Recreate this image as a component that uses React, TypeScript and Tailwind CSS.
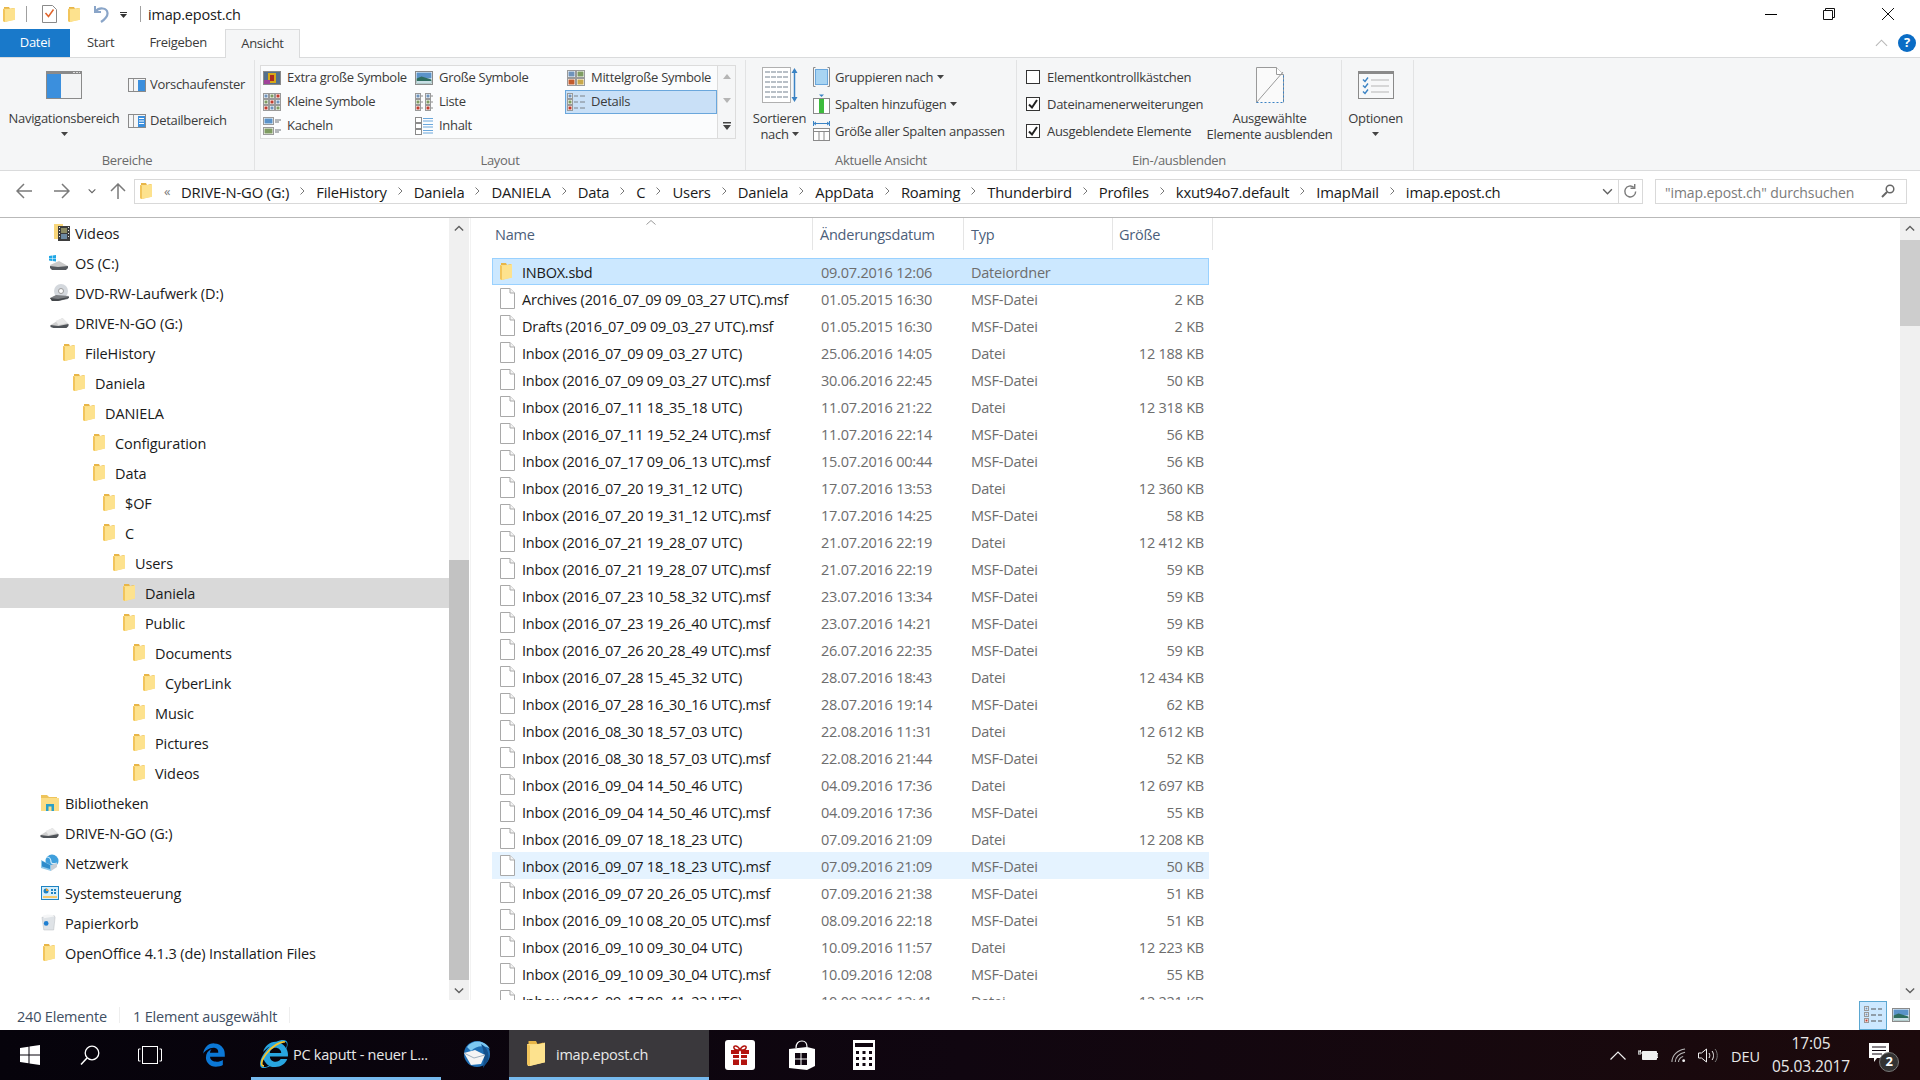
import React from "react";
import { FaInternetExplorer } from "react-icons/fa";
import { FaEdgeLegacy } from "react-icons/fa6";

const Folder = ({ className = "" }: { className?: string }) => (
  <svg viewBox="0 0 12 17" className={className} preserveAspectRatio="none">
    <path d="M1 0h5l1 2 4-1v13l-10 3z" fill="#e8b648" />
    <path d="M0 2h9.500l2.500-1v13.500l-10 2.500h-1.500z" fill="#fbdd86" />
    <path d="M2 16.800V3l10-1.500v13z" fill="#fde28e" />
    <path d="M0 2v14l2 1V3z" fill="#f2c55c" />
  </svg>
);

const Doc = () => (
  <svg viewBox="0 0 15 21" className="w-[15px] h-[21px] shrink-0">
    <path d="M.5.500h9.500l4.500 4.500v15.500h-14z" fill="#fff" stroke="#a9a9a9" />
    <path d="M10 .5v4.500h4.500" fill="#f4f4f4" stroke="#a9a9a9" />
  </svg>
);

const Drive = () => (
  <svg viewBox="0 0 18 12" className="w-[19px] h-[12px] ml-[1px]">
    <path d="M0 8l12-7 6 6-1 3H2z" fill="#cfcfcf" />
    <path d="M5 4l7-3 5 5-9 2z" fill="#e9e9e9" />
    <path d="M0 8l8 1 10-2v2l-2 2H3L0 10z" fill="#4f5358" />
  </svg>
);

const VideoIcon = () => (
  <svg viewBox="0 0 17 17" className="w-[17px] h-[17px] ml-[1px]">
    <path d="M1 0h9v15H1z" fill="#f8d67a" />
    <rect x="5" y="2" width="12" height="15" fill="#3d3d3d" />
    <rect x="8" y="4" width="6" height="5" fill="#8c8c64" />
    <rect x="8" y="10" width="6" height="5" fill="#6d8aa3" />
    <path d="M6 3h1v1H6zM6 6h1v1H6zM6 9h1v1H6zM6 12h1v1H6zM15 3h1v1h-1zM15 6h1v1h-1zM15 9h1v1h-1zM15 12h1v1h-1z" fill="#eee" />
  </svg>
);

const OsDrive = () => (
  <svg viewBox="0 0 20 15" className="w-[20px] h-[15px]">
    <path d="M1 10l9-4 9 5-1 3H3z" fill="#c9c9c9" />
    <path d="M1 11l8 1 10-1v2l-2 2H3l-2-2z" fill="#55595e" />
    <path d="M0 1l3-.5V3H0zM3.500.400L7 0v3H3.500zM0 3.500h3V6L0 5.500zM3.500 3.500H7V6.500L3.500 6z" fill="#1fa7e6" />
  </svg>
);

const DvdIcon = () => (
  <svg viewBox="0 0 19 18" className="w-[19px] h-[18px] ml-[1px]">
    <circle cx="11" cy="7" r="7" fill="#d4d8dd" />
    <circle cx="11" cy="7" r="2.500" fill="#fff" stroke="#999" />
    <path d="M0 14l6-3 13 1-1 3-10 2H2z" fill="#7b7e82" />
    <path d="M0 14l8 1 11-2v1l-11 3H2z" fill="#44474b" />
  </svg>
);

const Library = () => (
  <svg viewBox="0 0 18 16" className="w-[18px] h-[16px] ml-[2px]">
    <path d="M0 0h6l2 2h8v2H0z" fill="#eec45b" />
    <rect y="3" width="18" height="13" fill="#fbdd86" />
    <path d="M5 16V9h8v7h-2.500v-4.500h-3V16z" fill="#2b9fc7" />
  </svg>
);

const Network = () => (
  <svg viewBox="0 0 18 18" className="w-[18px] h-[18px] ml-[2px]">
    <circle cx="11" cy="7" r="6.500" fill="#3f9fdc" />
    <path d="M6 3c3 0 4 3 4 5s3 2 6 1" stroke="#d5edfa" strokeWidth="1.200" fill="none" />
    <path d="M0 6l10 5v6l-10-3z" fill="#8ec8ea" />
    <path d="M1 7l8 4v4l-8-2.500z" fill="#2f8ccb" />
    <path d="M10 11l6-2v4l-6 4z" fill="#c7ced6" />
  </svg>
);

const Control = () => (
  <svg viewBox="0 0 18 14" className="w-[18px] h-[14px] ml-[2px]">
    <rect x=".5" y=".5" width="17" height="13" fill="#d5effb" stroke="#1e83c2" />
    <circle cx="5" cy="5" r="2.500" fill="#1e83c2" />
    <path d="M5 5V2.500A2.500 2.500 0 0 1 7.500 5z" fill="#e89a2d" />
    <path d="M10 3h2v2h-2zM13 3h2v2h-2zM10 6h2v2h-2zM13 6h2v2h-2z" fill="#1e83c2" />
    <path d="M2 10h14v2H2z" fill="#f4c86a" />
  </svg>
);

const Recycle = () => (
  <svg viewBox="0 0 16 17" className="w-[15px] h-[17px] ml-[2px]">
    <path d="M1 3l13-2 1 2-1.500 13.500H3z" fill="#dfe3e7" stroke="#b3b8bd" strokeWidth=".5" />
    <path d="M2 1l5-1 6 .5 1 1.500-11 2z" fill="#f5f6f7" />
    <circle cx="5.500" cy="9.500" r="2.500" fill="#1f7fd1" />
  </svg>
);

const Chevron = ({ down = false, className = "" }: { down?: boolean; className?: string }) => (
  <svg viewBox="0 0 12 8" className={className}>
    <path d={down ? "M1 1.500l5 5 5-5" : "M1 6.500l5-5 5 5"} fill="none" stroke="#606060" strokeWidth="1.600" />
  </svg>
);

const Caret = ({ className = "" }: { className?: string }) => (
  <svg viewBox="0 0 7 4" className={"w-[7px] h-[4px] " + className}>
    <path d="M0 0h7L3.500 4z" fill="#444" />
  </svg>
);

const Crumb = () => (
  <svg viewBox="0 0 5 8" className="w-[5px] h-[8px] mx-[11px] shrink-0">
    <path d="M.5.500l3.500 3.500-3.500 3.500" fill="none" stroke="#777" />
  </svg>
);

const Arrow = ({ dir, color }: { dir: "l" | "r" | "u"; color: string }) => {
  const d = dir === "l" ? "M16 8H1M8 1L1 8l7 7" : dir === "r" ? "M0 8h15M8 1l7 7-7 7" : "M8 16V1M1 8l7-7 7 7";
  return (
    <svg viewBox="0 0 16 16" className="w-[16px] h-[16px] shrink-0">
      <path d={d} fill="none" stroke={color} strokeWidth="1.500" />
    </svg>
  );
};

/* ---------- ribbon pictures ---------- */
const PaneBig = () => (
  <svg viewBox="0 0 36 28" className="w-[36px] h-[28px]">
    <rect x=".5" y=".5" width="35" height="27" fill="#f3f4f5" stroke="#8a8a8a" />
    <rect x="1" y="3" width="14" height="24" fill="#3b8fdd" />
    <rect x="1" y="1" width="34" height="2" fill="#8a8a8a" />
    <path d="M27 1h2v1h-2zM30 1h2v1h-2zM33 1h1v1h-1z" fill="#ddd" />
  </svg>
);
const PaneSmall = ({ detail = false }: { detail?: boolean }) => (
  <svg viewBox="0 0 18 14" className="w-[18px] h-[14px] shrink-0">
    <rect x=".5" y=".5" width="17" height="13" fill="#f4f5f6" stroke="#8a8a8a" />
    <rect x="5" y="1" width="1" height="12" fill="#9a9a9a" />
    <rect x="10" y="2" width="7" height="11" fill="#3b8fdd" />
    {detail && <path d="M11 4.500h5M11 7h5M11 9.500h5" stroke="#fff" />}
  </svg>
);
const Img = ({ x, y, w, h, c }: { x: number; y: number; w: number; h: number; c: string }) => (
  <g>
    <rect x={x + 0.5} y={y + 0.5} width={w - 1} height={h - 1} fill="#fff" stroke="#9a9a9a" />
    <rect x={x + 1.5} y={y + 1.5} width={w - 3} height={h - 3} fill={c} />
  </g>
);
const S18 = ({ children, h = 18 }: { children: React.ReactNode; h?: number }) => (
  <svg viewBox={`0 0 18 ${h}`} className="w-[18px] shrink-0" style={{ height: h }}>
    {children}
  </svg>
);
const G: Record<string, React.ReactNode> = {
  xl: (
    <S18 h={14}>
      <rect x=".5" y=".5" width="17" height="13" fill="#fff" stroke="#8a8a8a" />
      <rect x="1" y="1" width="16" height="12" fill="#55708c" />
      <rect x="5" y="2" width="8" height="10" fill="#d8a818" />
      <rect x="7" y="4" width="4" height="6" fill="#b02a20" />
      <rect x="1" y="9" width="6" height="4" fill="#a0429a" />
    </S18>
  ),
  l: (
    <S18 h={14}>
      <rect x=".5" y=".5" width="17" height="13" fill="#fff" stroke="#8a8a8a" />
      <rect x="1.500" y="1.500" width="15" height="6" fill="#5b93c9" />
      <path d="M1.500 7.500l5-2 10 3v4h-15z" fill="#2e6d5f" />
      <rect x="1.500" y="10" width="15" height="2.500" fill="#c9dfe6" />
    </S18>
  ),
  m: (
    <S18 h={16}>
      <Img x={0} y={0} w={9} h={8} c="#6f93bb" />
      <Img x={9} y={0} w={9} h={8} c="#7f9c62" />
      <Img x={0} y={8} w={9} h={8} c="#c25b2d" />
      <Img x={9} y={8} w={9} h={8} c="#c8a84a" />
    </S18>
  ),
  s: (
    <S18>
      {[0, 6, 12].map((y) =>
        [0, 6, 12].map((x, i) => (
          <Img key={`${x}${y}`} x={x} y={y} w={6} h={6} c={["#6f93bb", "#7f9c62", "#c23c2d"][(i + y / 6) % 3]} />
        ))
      )}
    </S18>
  ),
  list: (
    <S18>
      {[0, 6, 12].map((y) =>
        [0, 10].map((x) => (
          <g key={`${x}${y}`}>
            <Img x={x} y={y} w={6} h={6} c={y === 12 ? "#c23c2d" : y === 6 ? "#7f9c62" : "#6f93bb"} />
            <path d={`M${x + 6} ${y + 3}h2`} stroke="#8a8a8a" />
          </g>
        ))
      )}
    </S18>
  ),
  details: (
    <S18>
      {[0, 6, 12].map((y) => (
        <g key={y}>
          <Img x={0} y={y} w={6} h={6} c={y === 12 ? "#c23c2d" : y === 6 ? "#7f9c62" : "#6f93bb"} />
          <path d={`M7 ${y + 3}h4M13 ${y + 3}h5`} stroke="#7c8288" />
        </g>
      ))}
    </S18>
  ),
  tile: (
    <S18>
      <Img x={0} y={0} w={11} h={8} c="#5b93c9" />
      <Img x={0} y={10} w={11} h={8} c="#7f9c62" />
      <path d="M12 3h6M12 5h4M12 13h6M12 15h4" stroke="#6d7378" />
    </S18>
  ),
  content: (
    <S18>
      {[0, 6, 12].map((y) => (
        <g key={y}>
          <rect x=".5" y={y + 0.5} width="6" height="5" fill="#fff" stroke="#8a8a8a" />
          <path d={`M8 ${y + 1.500}h10M8 ${y + 4}h10`} stroke="#6aa7dc" />
        </g>
      ))}
    </S18>
  ),
};

const Check = ({ on }: { on: boolean }) => (
  <div className="w-[14px] h-[14px] border border-[#333333] bg-white flex items-center justify-center shrink-0">
    {on && (
      <svg viewBox="0 0 12 12" className="w-[12px] h-[12px]">
        <path d="M2 6.500l3 3 5-7.500" fill="none" stroke="#222" strokeWidth="2" />
      </svg>
    )}
  </div>
);

const RibbonGroup = ({ width, label, children }: { width: string; label: string; children: React.ReactNode }) => (
  <div className={"flex flex-col border-r border-[#e2e3e4] shrink-0 " + width}>
    <div className="h-[92px] flex">{children}</div>
    <div className="h-[16px] leading-[16px] text-center text-[13px] tracking-[-0.3px] text-[#6a6a6a]">{label}</div>
  </div>
);

const Title = () => (
  <div className="h-[29px] flex items-center bg-white relative">
    <Folder className="w-[12px] h-[15px] ml-[3px]" />
    <div className="w-[1px] h-[16px] bg-[#a0a0a0] ml-[11px]" />
    <svg viewBox="0 0 15 18" className="w-[15px] h-[18px] ml-[15px]">
      <path d="M.5.500h10l4 4v13h-14z" fill="#fff" stroke="#8a8a8a" />
      <path d="M3.500 8l3 3.500 5-7" fill="none" stroke="#e0632a" strokeWidth="1.500" />
    </svg>
    <Folder className="w-[12px] h-[15px] ml-[11px]" />
    <svg viewBox="0 0 16 18" className="w-[16px] h-[18px] ml-[13px]">
      <path d="M2 1v6h6" fill="none" stroke="#8aa5c8" strokeWidth="2" />
      <path d="M2.500 6.500C6 2 14 2.500 14.500 8c.3 3.500-3 6.500-6.500 9" fill="none" stroke="#8aa5c8" strokeWidth="2.200" />
    </svg>
    <svg viewBox="0 0 7 7" className="w-[7px] h-[7px] ml-[11px]">
      <path d="M0 1h7v1H0zM0 3h7L3.500 7z" fill="#333" />
    </svg>
    <div className="w-[1px] h-[16px] bg-[#a0a0a0] ml-[13px]" />
    <span className="ml-[7px] pt-[1px] text-[14.500px] tracking-[-0.2px] text-[#202020]">imap.epost.ch</span>
    <div className="ml-auto flex items-center">
      <div className="w-[12px] h-[1px] bg-black" />
      <svg viewBox="0 0 12 12" className="w-[12px] h-[12px] ml-[46px]">
        <path d="M.5 2.500h9v9h-9zM2.500 2.500v-2h9v9h-2" fill="#fff" stroke="#111" />
      </svg>
      <svg viewBox="0 0 12 12" className="w-[12px] h-[12px] ml-[47px] mr-[26px]">
        <path d="M0 0l12 12M12 0L0 12" stroke="#111" />
      </svg>
    </div>
  </div>
);

const Tabs = () => (
  <div className="h-[29px] flex border-b border-[#dadbdc] bg-white text-[13px] tracking-[-0.3px]">
    <div className="w-[70px] h-[28px] bg-[#1979ca] text-white flex items-center justify-center">Datei</div>
    <div className="ml-[17px] h-[28px] flex items-center text-[#3b3b3b]">Start</div>
    <div className="ml-[35px] h-[28px] flex items-center text-[#3b3b3b]">Freigeben</div>
    <div className="ml-[18px] w-[75px] h-[29px] bg-[#f5f6f7] border border-b-0 border-[#dadbdc] flex items-center justify-center text-[#3b3b3b]">Ansicht</div>
    <div className="ml-auto flex items-center h-[28px]">
      <svg viewBox="0 0 14 8" className="w-[13px] h-[8px]">
        <path d="M1 7l6-6 6 6" fill="none" stroke="#b8b8b8" strokeWidth="1.200" />
      </svg>
      <div className="w-[18px] h-[18px] ml-[10px] mr-[4px] rounded-full bg-[#0a6cc5] text-white text-[13px] font-bold flex items-center justify-center">?</div>
    </div>
  </div>
);

const gallery: { k: string; t: string; active?: boolean }[] = [
  { k: "xl", t: "Extra große Symbole" },
  { k: "l", t: "Große Symbole" },
  { k: "m", t: "Mittelgroße Symbole" },
  { k: "s", t: "Kleine Symbole" },
  { k: "list", t: "Liste" },
  { k: "details", t: "Details", active: true },
  { k: "tile", t: "Kacheln" },
  { k: "content", t: "Inhalt" },
];

const Ribbon = () => (
  <div className="h-[113px] flex pt-[2px] bg-[#f5f6f7] border-b border-[#dadbdc] text-[13px] tracking-[-0.3px] text-[#3b3b3b] whitespace-nowrap">
    <RibbonGroup width="w-[255px]" label="Bereiche">
      <div className="w-[128px] flex flex-col items-center pt-[11px]">
        <PaneBig />
        <div className="mt-[10px] leading-[18px]">Navigationsbereich</div>
        <Caret className="mt-[5px]" />
      </div>
      <div className="flex flex-col pt-[13px] gap-[12px]">
        <div className="h-[24px] flex items-center gap-[4px]"><PaneSmall />Vorschaufenster</div>
        <div className="h-[24px] flex items-center gap-[4px]"><PaneSmall detail />Detailbereich</div>
      </div>
    </RibbonGroup>

    <RibbonGroup width="w-[491px]" label="Layout">
      <div className="flex pl-[5px] pt-[5px]">
        <div className="w-[458px] h-[74px] border border-[#dcdcdc] bg-[#fbfcfd] grid grid-cols-[152px_152px_152px] grid-rows-[24px_24px_24px]">
          {gallery.map((g) => (
            <div
              key={g.t}
              className={"flex items-center " + (g.active ? "outline outline-1 -outline-offset-1 outline-[#6aa7dc] bg-[#c9e0f7]" : "")}
            >
              <div className="w-[26px] pl-[2px] shrink-0 flex items-center">{G[g.k]}</div>
              {g.t}
            </div>
          ))}
        </div>
        <div className="w-[18px] h-[74px] border border-l-0 border-[#dcdcdc] flex flex-col items-center justify-between py-[8px]">
          <svg viewBox="0 0 8 5" className="w-[8px] h-[5px]"><path d="M4 0l4 5H0z" fill="#b5b5b5" /></svg>
          <svg viewBox="0 0 8 5" className="w-[8px] h-[5px]"><path d="M4 5l4-5H0z" fill="#b5b5b5" /></svg>
          <svg viewBox="0 0 8 8" className="w-[8px] h-[8px]"><path d="M0 0h8v1.500H0zM0 3h8L4 8z" fill="#444" /></svg>
        </div>
      </div>
    </RibbonGroup>

    <RibbonGroup width="w-[271px]" label="Aktuelle Ansicht">
      <div className="w-[67px] flex flex-col items-center pt-[7px]">
        <svg viewBox="0 0 36 36" className="w-[36px] h-[36px]">
          <rect x=".5" y=".5" width="28" height="35" fill="#fff" stroke="#b0b0b0" />
          <path d="M3 5h23M3 10h23M3 15h23M3 20h23M3 25h23M3 30h23" stroke="#b9c0c7" strokeWidth="2" strokeDasharray="5 1" />
          <path d="M32.500 3v30" stroke="#3b83c4" strokeWidth="1.500" />
          <path d="M29.500 6l3-5 3 5zM29.500 30l3 5 3-5z" fill="#3b83c4" />
        </svg>
        <div className="mt-[7px] leading-[16px] text-center">Sortieren</div>
        <div className="leading-[16px] flex items-center gap-[3px]">nach <Caret /></div>
      </div>
      <div className="flex flex-col pt-[4px]">
        <div className="h-[27px] flex items-center gap-[5px]">
          <svg viewBox="0 0 17 20" className="w-[17px] h-[20px]">
            <path d="M2.500.500H.500v19h2M14.500.500h2v19h-2" fill="none" stroke="#8a8a8a" />
            <rect x="2.500" y="2.500" width="12" height="15" fill="#a8d4f2" stroke="#6aa7dc" />
          </svg>
          <span>Gruppieren nach</span><Caret className="ml-[-1px]" />
        </div>
        <div className="h-[27px] flex items-center gap-[5px]">
          <svg viewBox="0 0 17 20" className="w-[17px] h-[20px]">
            <rect x=".5" y="4.500" width="16" height="15" fill="#fff" stroke="#8a8a8a" />
            <rect x="6" y="5" width="5" height="14" fill="#3dbb3d" />
            <path d="M6 .5h5L8.500 3z" fill="#3b83c4" />
          </svg>
          <span>Spalten hinzufügen</span><Caret className="ml-[-1px]" />
        </div>
        <div className="h-[27px] flex items-center gap-[5px]">
          <svg viewBox="0 0 17 20" className="w-[17px] h-[20px]">
            <path d="M.5 0v5M16.500 0v5" stroke="#3b83c4" />
            <path d="M1 2.500h15M3 1L1 2.500 3 4M14 1l2 1.500L14 4" stroke="#3b83c4" fill="none" />
            <rect x=".5" y="7.500" width="16" height="12" fill="#fff" stroke="#8a8a8a" />
            <path d="M.5 10.500h16M6 10.500v9M11 10.500v9" stroke="#8a8a8a" />
          </svg>
          <span>Größe aller Spalten anpassen</span>
        </div>
      </div>
    </RibbonGroup>

    <RibbonGroup width="w-[325px]" label="Ein-/ausblenden">
      <div className="w-[181px] flex flex-col pt-[4px] pl-[9px]">
        {[
          ["Elementkontrollkästchen", false],
          ["Dateinamenerweiterungen", true],
          ["Ausgeblendete Elemente", true],
        ].map(([t, on]) => (
          <div key={t as string} className="h-[27px] flex items-center gap-[7px]">
            <Check on={on as boolean} />
            {t as string}
          </div>
        ))}
      </div>
      <div className="flex-1 flex flex-col items-center pt-[7px]">
        <svg viewBox="0 0 28 36" className="w-[28px] h-[36px]">
          <path d="M.5 35.500V.500h20l7 7v28" fill="#fafafa" stroke="#9a9a9a" />
          <path d="M20.500.500v7h7" fill="#fff" stroke="#9a9a9a" />
          <path d="M.5 35.500L27 5" stroke="#9a9a9a" />
          <path d="M.5 35.500h27v-28" fill="none" stroke="#3b83c4" strokeDasharray="2 2" />
        </svg>
        <div className="mt-[7px] leading-[16px]">Ausgewählte</div>
        <div className="leading-[16px]">Elemente ausblenden</div>
      </div>
    </RibbonGroup>

    <RibbonGroup width="w-[72px]" label="">
      <div className="w-full flex flex-col items-center pt-[11px] pr-[4px]">
        <svg viewBox="0 0 36 28" className="w-[36px] h-[28px]">
          <rect x=".5" y=".5" width="35" height="27" fill="#f7f8f9" stroke="#8a8a8a" />
          <rect x="1" y="1" width="34" height="2" fill="#8a8a8a" />
          <path d="M13 9h18M13 15h18M13 21h18" stroke="#b5b5b5" />
          <path d="M5 8.500l2 2 3-4M5 14.500l2 2 3-4M5 20.500l2 2 3-4" fill="none" stroke="#3b83c4" strokeWidth="1.400" />
        </svg>
        <div className="mt-[10px] leading-[18px]">Optionen</div>
        <Caret className="mt-[5px]" />
      </div>
    </RibbonGroup>
    <div className="flex-1" />
  </div>
);

const crumbs = ["DRIVE-N-GO (G:)", "FileHistory", "Daniela", "DANIELA", "Data", "C", "Users", "Daniela", "AppData", "Roaming", "Thunderbird", "Profiles", "kxut94o7.default", "ImapMail", "imap.epost.ch"];

const AddressBar = () => (
  <div className="h-[47px] flex pt-[8px] bg-white border-b border-[#b9b9b9]">
    <div className="w-[134px] h-[25px] flex items-center pl-[16px]">
      <Arrow dir="l" color="#7a7a7a" />
      <div className="ml-[22px]"><Arrow dir="r" color="#7a7a7a" /></div>
      <Chevron down className="w-[8px] h-[6px] ml-[18px]" />
      <div className="ml-[14px]"><Arrow dir="u" color="#7a7a7a" /></div>
    </div>
    <div className="w-[1509px] h-[25px] border border-[#d9d9d9] flex items-center text-[14.800px] text-[#1a1a1a] tracking-[-0.2px]">
      <Folder className="w-[12px] h-[16px] ml-[5px] shrink-0" />
      <span className="ml-[12px] text-[#777777] text-[13px] leading-none w-[17px] shrink-0">«</span>
      {crumbs.map((c, i) => (
        <React.Fragment key={i}>
          {i > 0 && <Crumb />}
          <span className="whitespace-nowrap pt-[2px]">{c}</span>
        </React.Fragment>
      ))}
      <div className="ml-auto h-full flex items-center">
        <Chevron down className="w-[11px] h-[7px] mr-[5px]" />
        <div className="w-[24px] h-full border-l border-[#d9d9d9] flex items-center justify-center">
          <svg viewBox="0 0 16 16" className="w-[15px] h-[15px]">
            <path d="M13.500 8a5.800 5.800 0 1 1-2-4.400" fill="none" stroke="#7a7a7a" strokeWidth="1.500" />
            <path d="M12.500 0v4.500H8" fill="none" stroke="#7a7a7a" strokeWidth="1.500" />
          </svg>
        </div>
      </div>
    </div>
    <div className="ml-[12px] w-[252px] h-[25px] border border-[#d9d9d9] flex items-center pl-[9px] pr-[11px] text-[14px] tracking-[-0.1px] text-[#7b7b7b]">
      <span className="pt-[2px]">"imap.epost.ch" durchsuchen</span>
      <svg viewBox="0 0 14 14" className="w-[14px] h-[14px] ml-auto">
        <circle cx="9" cy="5" r="3.800" fill="none" stroke="#666" strokeWidth="1.500" />
        <path d="M6 8l-5 5" stroke="#666" strokeWidth="2" />
      </svg>
    </div>
  </div>
);

type T = { t: string; pl: string; icon?: React.ReactNode; sel?: boolean };
const F = <Folder className="w-[12px] h-[17px] ml-[4px]" />;
const tree: T[] = [
  { t: "Videos", pl: "pl-[49px]", icon: <div className="ml-[3px]"><VideoIcon /></div> },
  { t: "OS (C:)", pl: "pl-[49px]", icon: <OsDrive /> },
  { t: "DVD-RW-Laufwerk (D:)", pl: "pl-[49px]", icon: <DvdIcon /> },
  { t: "DRIVE-N-GO (G:)", pl: "pl-[49px]", icon: <Drive /> },
  { t: "FileHistory", pl: "pl-[59px]" },
  { t: "Daniela", pl: "pl-[69px]" },
  { t: "DANIELA", pl: "pl-[79px]" },
  { t: "Configuration", pl: "pl-[89px]" },
  { t: "Data", pl: "pl-[89px]" },
  { t: "$OF", pl: "pl-[99px]" },
  { t: "C", pl: "pl-[99px]" },
  { t: "Users", pl: "pl-[109px]" },
  { t: "Daniela", pl: "pl-[119px]", sel: true },
  { t: "Public", pl: "pl-[119px]" },
  { t: "Documents", pl: "pl-[129px]" },
  { t: "CyberLink", pl: "pl-[139px]" },
  { t: "Music", pl: "pl-[129px]" },
  { t: "Pictures", pl: "pl-[129px]" },
  { t: "Videos", pl: "pl-[129px]" },
  { t: "Bibliotheken", pl: "pl-[39px]", icon: <Library /> },
  { t: "DRIVE-N-GO (G:)", pl: "pl-[39px]", icon: <Drive /> },
  { t: "Netzwerk", pl: "pl-[39px]", icon: <Network /> },
  { t: "Systemsteuerung", pl: "pl-[39px]", icon: <Control /> },
  { t: "Papierkorb", pl: "pl-[39px]", icon: <Recycle /> },
  { t: "OpenOffice 4.1.3 (de) Installation Files", pl: "pl-[39px]" },
];

const Scrollbar = ({ top, thumb, thumbClass }: { top: string; thumb: string; thumbClass: string }) => (
  <div className="w-[20px] h-full bg-[#f0f0f0] flex flex-col shrink-0">
    <div className="h-[22px] flex items-center justify-center shrink-0">
      <Chevron className="w-[10px] h-[7px]" />
    </div>
    <div className={top + " shrink-0"} />
    <div className={thumb + " " + thumbClass + " shrink-0"} />
    <div className="flex-1" />
    <div className="h-[20px] flex items-center justify-center shrink-0">
      <Chevron down className="w-[10px] h-[7px]" />
    </div>
  </div>
);

const TreePane = () => (
  <div className="w-[449px] h-full shrink-0 text-[14.500px] tracking-[-0.1px] text-[#1a1a1a]">
    {tree.map((r, i) => (
      <div key={i} className={"h-[30px] flex items-center whitespace-nowrap " + r.pl + (r.sel ? " bg-[#d9d9d9]" : "")}>
        <div className="w-[26px] shrink-0 flex items-center">{r.icon ?? F}</div>
        <span className="pt-[2px]">{r.t}</span>
      </div>
    ))}
  </div>
);

type Row = [string, string, string, string];
const files: Row[] = [
  ["INBOX.sbd", "09.07.2016 12:06", "Dateiordner", ""],
  ["Archives (2016_07_09 09_03_27 UTC).msf", "01.05.2015 16:30", "MSF-Datei", "2 KB"],
  ["Drafts (2016_07_09 09_03_27 UTC).msf", "01.05.2015 16:30", "MSF-Datei", "2 KB"],
  ["Inbox (2016_07_09 09_03_27 UTC)", "25.06.2016 14:05", "Datei", "12 188 KB"],
  ["Inbox (2016_07_09 09_03_27 UTC).msf", "30.06.2016 22:45", "MSF-Datei", "50 KB"],
  ["Inbox (2016_07_11 18_35_18 UTC)", "11.07.2016 21:22", "Datei", "12 318 KB"],
  ["Inbox (2016_07_11 19_52_24 UTC).msf", "11.07.2016 22:14", "MSF-Datei", "56 KB"],
  ["Inbox (2016_07_17 09_06_13 UTC).msf", "15.07.2016 00:44", "MSF-Datei", "56 KB"],
  ["Inbox (2016_07_20 19_31_12 UTC)", "17.07.2016 13:53", "Datei", "12 360 KB"],
  ["Inbox (2016_07_20 19_31_12 UTC).msf", "17.07.2016 14:25", "MSF-Datei", "58 KB"],
  ["Inbox (2016_07_21 19_28_07 UTC)", "21.07.2016 22:19", "Datei", "12 412 KB"],
  ["Inbox (2016_07_21 19_28_07 UTC).msf", "21.07.2016 22:19", "MSF-Datei", "59 KB"],
  ["Inbox (2016_07_23 10_58_32 UTC).msf", "23.07.2016 13:34", "MSF-Datei", "59 KB"],
  ["Inbox (2016_07_23 19_26_40 UTC).msf", "23.07.2016 14:21", "MSF-Datei", "59 KB"],
  ["Inbox (2016_07_26 20_28_49 UTC).msf", "26.07.2016 22:35", "MSF-Datei", "59 KB"],
  ["Inbox (2016_07_28 15_45_32 UTC)", "28.07.2016 18:43", "Datei", "12 434 KB"],
  ["Inbox (2016_07_28 16_30_16 UTC).msf", "28.07.2016 19:14", "MSF-Datei", "62 KB"],
  ["Inbox (2016_08_30 18_57_03 UTC)", "22.08.2016 11:31", "Datei", "12 612 KB"],
  ["Inbox (2016_08_30 18_57_03 UTC).msf", "22.08.2016 21:44", "MSF-Datei", "52 KB"],
  ["Inbox (2016_09_04 14_50_46 UTC)", "04.09.2016 17:36", "Datei", "12 697 KB"],
  ["Inbox (2016_09_04 14_50_46 UTC).msf", "04.09.2016 17:36", "MSF-Datei", "55 KB"],
  ["Inbox (2016_09_07 18_18_23 UTC)", "07.09.2016 21:09", "Datei", "12 208 KB"],
  ["Inbox (2016_09_07 18_18_23 UTC).msf", "07.09.2016 21:09", "MSF-Datei", "50 KB"],
  ["Inbox (2016_09_07 20_26_05 UTC).msf", "07.09.2016 21:38", "MSF-Datei", "51 KB"],
  ["Inbox (2016_09_10 08_20_05 UTC).msf", "08.09.2016 22:18", "MSF-Datei", "51 KB"],
  ["Inbox (2016_09_10 09_30_04 UTC)", "10.09.2016 11:57", "Datei", "12 223 KB"],
  ["Inbox (2016_09_10 09_30_04 UTC).msf", "10.09.2016 12:08", "MSF-Datei", "55 KB"],
  ["Inbox (2016_09_17 08_41_22 UTC)", "10.09.2016 12:41", "Datei", "12 221 KB"],
];

const ListPane = () => (
  <div className="flex-1 h-full overflow-hidden pl-[21px] text-[14.500px] tracking-[-0.23px] border-l border-[#f2f2f2] ml-[1px]">
    <div className="h-[32px] flex relative text-[#4c607a]">
      <svg viewBox="0 0 10 5" className="absolute left-[154px] top-[2px] w-[10px] h-[5px]">
        <path d="M.5 4.500L5 .5l4.500 4" fill="none" stroke="#9a9a9a" />
      </svg>
      <div className="w-[321px] flex items-center pl-[3px] pt-[3px] border-r border-[#e5e5e5]">Name</div>
      <div className="w-[151px] flex items-center pl-[7px] pt-[3px] border-r border-[#e5e5e5]">Änderungsdatum</div>
      <div className="w-[149px] flex items-center pl-[7px] pt-[3px] border-r border-[#e5e5e5]">Typ</div>
      <div className="w-[100px] flex items-center pl-[6px] pt-[3px] border-r border-[#e5e5e5]">Größe</div>
    </div>
    <div className="h-[8px]" />
    <div className="w-[717px]">
      {files.map((f, i) => (
        <div
          key={i}
          className={
            "h-[27px] grid grid-cols-[321px_151px_149px_96px] items-center whitespace-nowrap " +
            (i === 0 ? "bg-[#cce8ff] outline outline-1 -outline-offset-1 outline-[#99d1ff]" : i === 22 ? "bg-[#e5f3ff]" : "")
          }
        >
          <div className="flex items-center text-[#1a1a1a]">
            <div className="w-[30px] pl-[8px] shrink-0 flex items-center">
              {i === 0 ? <Folder className="w-[12px] h-[17px]" /> : <Doc />}
            </div>
            <span className="pt-[4px]">{f[0]}</span>
          </div>
          <div className="pl-[8px] pt-[4px] text-[#6d6d6d]">{f[1]}</div>
          <div className="pl-[7px] pt-[4px] text-[#6d6d6d]">{f[2]}</div>
          <div className="text-right pr-[5px] pt-[4px] text-[#6d6d6d]">{f[3]}</div>
        </div>
      ))}
    </div>
  </div>
);

const Status = () => (
  <div className="h-[30px] flex items-center bg-white text-[14.500px] tracking-[-0.2px] text-[#3f4f63]">
    <span className="ml-[17px] w-[102px] pt-[3px]">240 Elemente</span>
    <div className="w-[1px] h-[16px] bg-[#eeeeee]" />
    <span className="ml-[13px] w-[156px] pt-[3px]">1 Element ausgewählt</span>
    <div className="w-[1px] h-[16px] bg-[#eeeeee]" />
    <div className="ml-auto flex items-center mr-[10px]">
      <div className="w-[28px] h-[29px] bg-[#cce8ff] border border-[#5ba7d1] flex items-center justify-center">
        <S18>
          {[0, 6, 12].map((y) => (
            <g key={y}>
              <Img x={0} y={y} w={5} h={5} c={y === 12 ? "#c23c2d" : "#6f93bb"} />
              <path d={`M7 ${y + 3}h5M14 ${y + 3}h4`} stroke="#555" />
            </g>
          ))}
        </S18>
      </div>
      <div className="ml-[5px]">{G.l}</div>
    </div>
  </div>
);

const TaskBar = () => (
  <div className="h-[50px] flex items-center bg-gradient-to-r from-[#06030b] via-[#100610] to-[#1c0a0c] text-[14.500px] tracking-[-0.25px] text-[#e8e8e8]">
    <svg viewBox="0 0 20 20" className="w-[20px] h-[20px] ml-[20px]">
      <path d="M0 3l8.500-1.200V9.500H0zM9.500 1.600L20 0v9.500H9.500zM0 10.500h8.500v7.700L0 17zM9.500 10.500H20V20L9.500 18.400z" fill="#fff" />
    </svg>
    <svg viewBox="0 0 20 20" className="w-[20px] h-[20px] ml-[40px]">
      <circle cx="12" cy="8" r="6.800" fill="none" stroke="#fff" strokeWidth="1.300" />
      <path d="M7 13L1 19.500" stroke="#fff" strokeWidth="1.500" />
    </svg>
    <svg viewBox="0 0 24 18" className="w-[24px] h-[18px] ml-[38px]">
      <rect x="4.500" y=".5" width="15" height="17" fill="none" stroke="#fff" />
      <path d="M2.500 3H.5v12h2M21.500 3h2v12h-2" fill="none" stroke="#fff" />
    </svg>
    <FaEdgeLegacy className="w-[24px] h-[24px] ml-[40px] text-[#0b78d6]" />
    <div className="ml-[25px] w-[190px] h-full border-b-[3px] border-[#76b9ed] flex items-center pl-[9px]">
      <div className="relative w-[28px] h-[28px] shrink-0">
        <FaInternetExplorer className="w-[28px] h-[28px] text-[#28a5e0]" />
        <svg viewBox="0 0 28 28" className="absolute inset-0 w-[28px] h-[28px]">
          <path d="M25 2C21 1 12 6 6 14S1 26 4 26" fill="none" stroke="#f5c32c" strokeWidth="1.800" />
        </svg>
      </div>
      <span className="ml-[5px] pt-[3px] whitespace-nowrap">PC kaputt - neuer L...</span>
    </div>
    <svg viewBox="0 0 30 30" className="w-[30px] h-[30px] ml-[21px]">
      <circle cx="15" cy="14" r="13" fill="#1f6fb5" />
      <path d="M5 7C10 0 22-1 28 9 24 5 14 5 9 11z" fill="#7cc8f2" />
      <path d="M19 4c6 3 9 10 7 17l-5 7c1-8 2-16-2-24z" fill="#134f8a" />
      <path d="M2 13l11-3 10 5-4 9-10 1z" fill="#f4f4f4" />
      <path d="M2 13l10 5 11-3" fill="none" stroke="#9fb0bf" />
    </svg>
    <div className="ml-[17px] w-[200px] h-full bg-[#3a383c] border-b-[3px] border-[#76b9ed] flex items-center pl-[18px]">
      <Folder className="w-[18px] h-[25px] shrink-0" />
      <span className="ml-[11px] pt-[3px] whitespace-nowrap">imap.epost.ch</span>
    </div>
    <div className="ml-[16px] w-[30px] h-[30px] bg-white rounded-[3px] flex items-center justify-center">
      <svg viewBox="0 0 20 20" className="w-[20px] h-[20px]">
        <path d="M1 5h18v4H1zM3 10h14v10H3z" fill="#b3130e" />
        <path d="M9 5h2v15H9zM3 13h14v1.500H3z" fill="#fff" />
        <path d="M10 5C8 0 3 0 4 3s4 2 6 2c2 0 5 1 6-2s-4-3-6 2z" fill="none" stroke="#b3130e" strokeWidth="1.500" />
      </svg>
    </div>
    <svg viewBox="0 0 26 30" className="w-[26px] h-[30px] ml-[34px]">
      <path d="M0 9l18-2 8 2v17l-8 4-18-2z" fill="#fff" />
      <path d="M7 8c0-5 3-7 6-7s5 2 5 6" fill="none" stroke="#fff" strokeWidth="1.200" />
      <path d="M6 13h5.500v5.500H6zM12.500 13H18v5.500h-5.500zM6 19.500h5.500V25H6zM12.500 19.500H18V25h-5.500z" fill="#100610" />
    </svg>
    <svg viewBox="0 0 22 30" className="w-[22px] h-[30px] ml-[38px]">
      <rect width="22" height="30" fill="#fff" />
      <rect x="2" y="3" width="18" height="4" fill="#100610" />
      <path d="M3 11h3v3H3zM9.500 11h3v3h-3zM16 11h3v3h-3zM3 17h3v3H3zM9.500 17h3v3h-3zM16 17h3v3h-3zM3 23h3v3H3zM9.500 23h3v3h-3zM16 23h3v3h-3z" fill="#100610" />
    </svg>

    <svg viewBox="0 0 16 9" className="w-[16px] h-[9px] ml-auto">
      <path d="M.5 8.500l7.500-7.500 7.500 7.500" fill="none" stroke="#f0f0f0" strokeWidth="1.200" />
    </svg>
    <svg viewBox="0 0 20 12" className="w-[20px] h-[12px] ml-[12px]">
      <path d="M4.500 2.500h14v8h-14z" fill="#f0f0f0" stroke="#f0f0f0" />
      <path d="M19 4.500h1v4h-1zM0 3h3v2H0zM1 1v2M2.500 1v2" stroke="#f0f0f0" />
    </svg>
    <svg viewBox="0 0 16 16" className="w-[15px] h-[15px] ml-[13px]">
      <path d="M1 15C1 8 7 2 15 1M4.500 15C4.500 10 9 5.500 15 4.500M8 15c0-3 2.500-5.500 5-6" fill="none" stroke="#bbbbbb" strokeWidth="1.100" />
      <circle cx="13.500" cy="13.500" r="1.500" fill="#f0f0f0" />
    </svg>
    <svg viewBox="0 0 20 15" className="w-[20px] h-[15px] ml-[12px]">
      <path d="M.5 5h3l5-4v13l-5-4h-3z" fill="none" stroke="#f0f0f0" />
      <path d="M11 5c1 1.500 1 3.500 0 5M14 3c2 2.500 2 6.500 0 9" fill="none" stroke="#f0f0f0" />
      <path d="M17 1c3 3.500 3 9.500 0 13" fill="none" stroke="#777" />
    </svg>
    <span className="ml-[13px] w-[28px] pt-[3px] tracking-[-0.1px]">DEU</span>
    <div className="ml-[12px] w-[80px] flex flex-col items-center leading-[23px] whitespace-nowrap text-[15.500px] tracking-[-0.1px]">
      <span>17:05</span>
      <span>05.03.2017</span>
    </div>
    <div className="relative ml-[18px] mr-[31px] w-[20px] h-[20px] mb-[4px]">
      <svg viewBox="0 0 20 20" className="w-[20px] h-[20px]">
        <path d="M0 0h20v15H8l-3 4v-4H0z" fill="#fff" />
        <path d="M3 4h14M3 7.500h14M3 11h10" stroke="#100610" />
      </svg>
      <div className="absolute left-[10px] top-[9px] w-[20px] h-[20px] rounded-full bg-[#333333] border border-[#777777] text-white text-[13px] font-bold flex items-center justify-center">2</div>
    </div>
  </div>
);

export default function App() {
  return (
    <div className="w-[1920px] h-[1080px] overflow-hidden flex flex-col bg-white font-['Open_Sans','Noto_Sans',sans-serif]">
      <Title />
      <Tabs />
      <Ribbon />
      <AddressBar />
      <div className="h-[783px] flex overflow-hidden bg-white">
        <TreePane />
        <Scrollbar top="h-[320px]" thumb="h-[420px]" thumbClass="bg-[#c2c2c2]" />
        <ListPane />
        <Scrollbar top="h-0" thumb="h-[86px]" thumbClass="bg-[#cdcdcd]" />
      </div>
      <Status />
      <TaskBar />
    </div>
  );
}
